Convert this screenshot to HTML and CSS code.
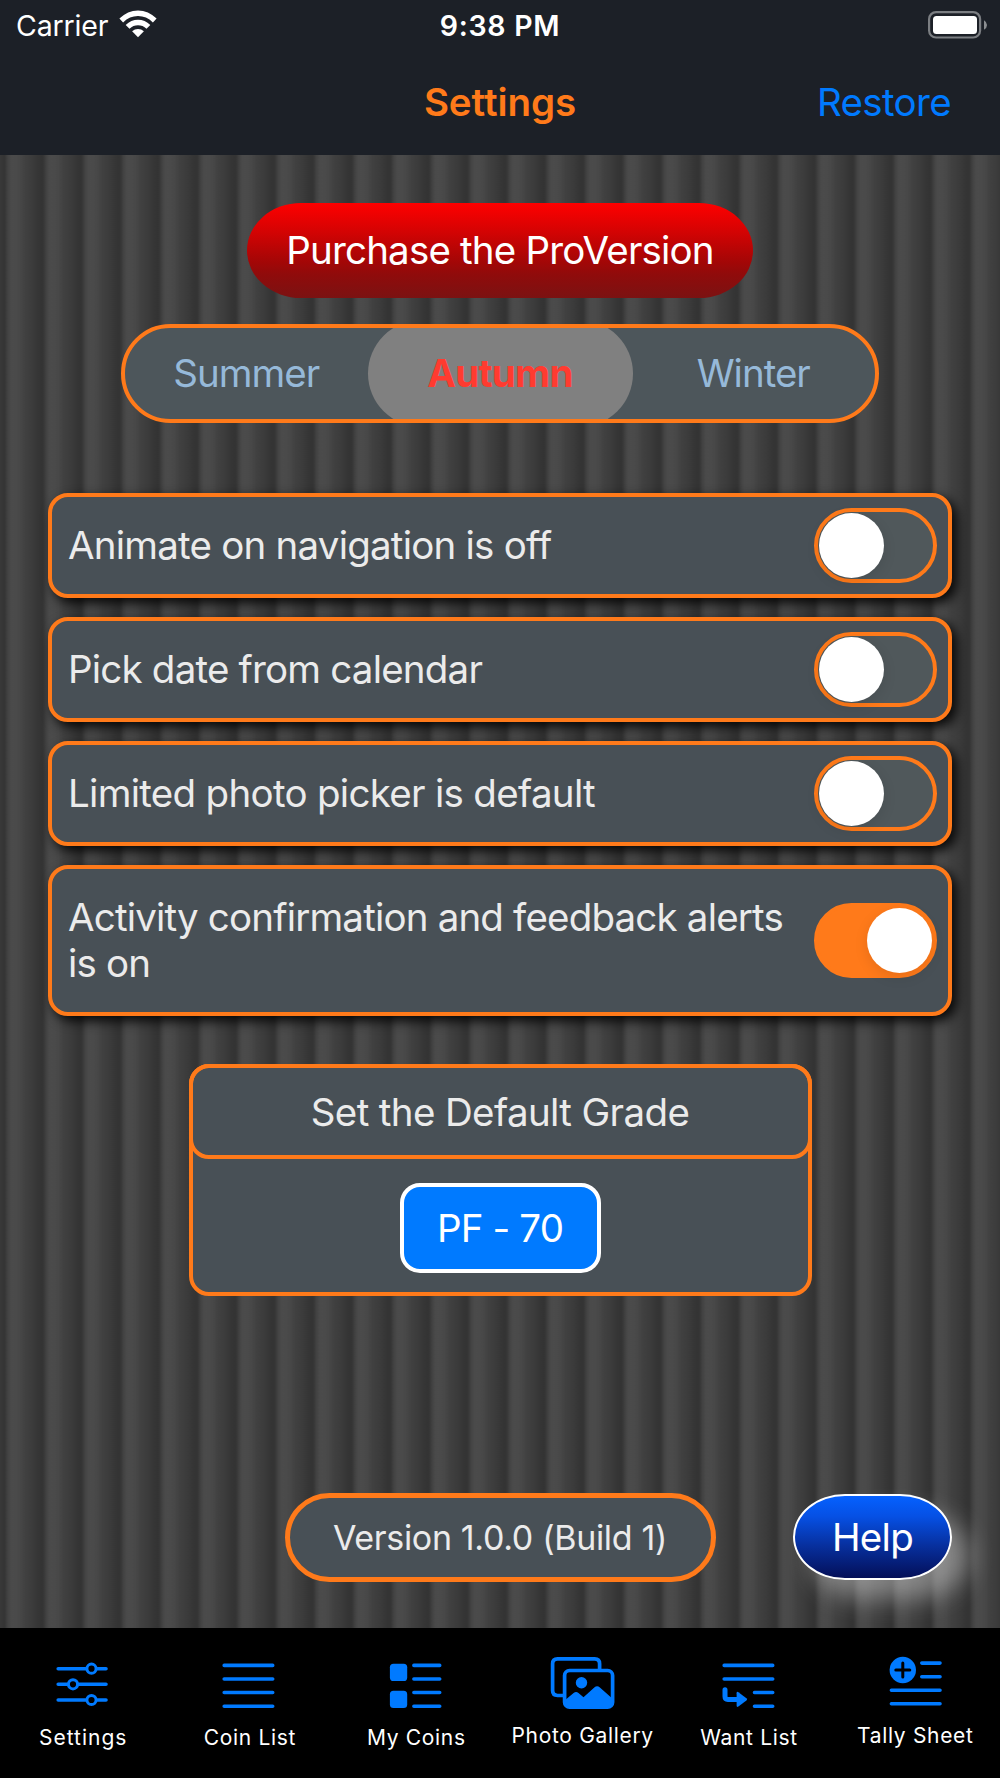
FILE: index.html
```html
<!DOCTYPE html>
<html lang="en">
<head>
<meta charset="utf-8">
<meta name="viewport" content="width=device-width">
<title>Settings</title>
<link rel="stylesheet" href="styles.css">
</head>
<body>
<div class="app">
  <header class="topbar">
    <div class="status">
      <div class="status-left">
        <span class="carrier">Carrier</span>
        <svg class="wifi" width="38" height="28" viewBox="0 0 38 28">
          <path d="M.4 8.6Q8.6.4 19 .4T37.600 8.600L33.900 12.400Q27.400 6 19 6T4.100 12.400Z"/>
          <path d="M6.700 15Q12 9.800 19 9.800T31.300 15L27.500 18.700Q23.800 15.300 19 15.300T10.500 18.700Z"/>
          <path d="M13.100 21.200Q15.700 18.900 19 18.900T24.900 21.200L19 27.200Z"/>
        </svg>
      </div>
      <span class="clock">9:38 PM</span>
      <svg class="battery" width="60" height="28" viewBox="0 0 60 28">
        <rect class="battery-shell" x="1.100" y="1.100" width="51" height="25.400" rx="7"/>
        <rect x="5" y="5" width="44" height="18" rx="3.500" fill="#fff"/>
        <path d="M56 9.200Q59 11 59 14T56 18.800Z" fill="#8b8e91"/>
      </svg>
    </div>
    <nav class="navbar">
      <h1 class="title">Settings</h1>
      <a class="restore">Restore</a>
    </nav>
  </header>

  <main class="content">
    <button class="purchase">Purchase the ProVersion</button>

    <div class="segments">
      <span class="segment segment-summer">Summer</span>
      <span class="segment segment-active">Autumn</span>
      <span class="segment segment-winter">Winter</span>
    </div>

    <section class="options">
      <div class="option">
        <span class="option-text text-animate">Animate on navigation is off</span>
        <span class="toggle"><i class="knob"></i></span>
      </div>
      <div class="option">
        <span class="option-text text-date">Pick date from calendar</span>
        <span class="toggle"><i class="knob"></i></span>
      </div>
      <div class="option">
        <span class="option-text text-photo">Limited photo picker is default</span>
        <span class="toggle"><i class="knob"></i></span>
      </div>
      <div class="option option-tall">
        <span class="option-text">Activity confirmation and feedback alerts<br>is on</span>
        <span class="toggle toggle-on"><i class="knob"></i></span>
      </div>
    </section>

    <section class="grade">
      <h2 class="grade-title">Set the Default Grade</h2>
      <button class="grade-value">PF - 70</button>
    </section>

    <footer class="footer">
      <span class="version">Version 1.0.0 (Build 1)</span>
      <button class="help">Help</button>
    </footer>
  </main>

  <nav class="tabs">
    <a class="tab">
      <svg class="icon" viewBox="0 0 68 60">
        <path d="M9.200 13.700H36.500M48.500 13.700H57M9.200 29.300H18M30 29.300H57M9.200 45H36.500M48.500 45H57"/>
        <circle class="ring" cx="42.500" cy="13.700" r="4.600"/>
        <circle class="ring" cx="24" cy="29.300" r="4.600"/>
        <circle class="ring" cx="42.500" cy="45" r="4.600"/>
      </svg>
      <span class="label label-settings">Settings</span>
    </a>
    <a class="tab">
      <svg class="icon" viewBox="0 0 68 60">
        <path d="M9.200 10.400H57.700M9.200 24H57.700M9.200 37.500H57.700M9.200 51.200H57.700"/>
      </svg>
      <span class="label">Coin List</span>
    </a>
    <a class="tab">
      <svg class="icon" viewBox="0 0 68 60">
        <rect class="solid" x="7.900" y="8.700" width="17.300" height="17.300" rx="3.600"/>
        <rect class="solid" x="7.900" y="35.800" width="17.300" height="17.300" rx="3.600"/>
        <path d="M31.900 10.400H57.700M31.900 24H57.700M31.900 37.500H57.700M31.900 51.200H57.700"/>
      </svg>
      <span class="label">My Coins</span>
    </a>
    <a class="tab tab-raised">
      <svg class="icon" viewBox="0 0 68 60">
        <path class="frame" d="M16 40.500H9.500Q4.600 40.500 4.600 35.600V8.700Q4.600 3.800 9.500 3.800H46.700Q51.600 3.800 51.600 8.700V15"/>
        <rect class="frame" x="16.600" y="15.500" width="48" height="36.700" rx="5"/>
        <circle class="solid" cx="33.500" cy="27.700" r="5.700"/>
        <path class="solid" d="M16.600 45.500L25.600 38Q28.100 36 30.500 38L35.500 42.300L46.300 32.500Q49.100 30.200 51.900 32.500L64.600 43.800V47.500Q64.600 52.200 60 52.200H21.200Q16.600 52.200 16.600 47.500Z"/>
      </svg>
      <span class="label">Photo Gallery</span>
    </a>
    <a class="tab">
      <svg class="icon" viewBox="0 0 68 60">
        <path d="M10.200 10.400H58.700M10.200 24H58.700M40.500 37.500H58.700M40.500 51.200H58.700"/>
        <path class="hook" d="M11 34.800V41.500Q11 44.400 13.900 44.400H24"/>
        <path class="solid" d="M22.600 38.200Q22.600 36 24.400 37.200L32.400 43.200Q33.900 44.400 32.400 45.600L24.400 51.600Q22.600 52.800 22.600 50.600Z"/>
      </svg>
      <span class="label">Want List</span>
    </a>
    <a class="tab tab-raised">
      <svg class="icon" viewBox="0 0 68 60">
        <circle class="solid" cx="21.800" cy="15" r="13.200"/>
        <path class="plus" d="M21.800 8V22M14.800 15H28.800"/>
        <path d="M40.800 8.100H59M40.800 21.700H59M10.400 35.300H59M10.400 48.800H59"/>
      </svg>
      <span class="label">Tally Sheet</span>
    </a>
  </nav>
</div>
</body>
</html>
```
FILE: styles.css
```css
* { box-sizing: border-box; }

body {
  margin: 0;
  background: #000;
  font-family: Inter, "Liberation Sans", sans-serif;
  font-size: 38.5px;
  letter-spacing: -0.82px;
  color: #ebebeb;
}

h1, h2 { margin: 0; font-size: inherit; font-weight: 400; }

button {
  margin: 0;
  padding: 0;
  border: 0;
  font: inherit;
  letter-spacing: inherit;
  color: #fff;
}

.app {
  display: flex;
  flex-direction: column;
  width: 1000px;
  height: 1778px;
  overflow: hidden;
}

/* Status and navigation bars */
.topbar { height: 155px; background: #1c2027; }

.status {
  display: grid;
  grid-template-columns: 1fr auto 1fr;
  align-items: center;
  height: 48px;
  padding: 2px 12px 0 16px;
  color: #fff;
  font-size: 28.5px;
}
.status-left { display: flex; align-items: center; gap: 11px; }
.carrier { letter-spacing: -0.15px; }
.wifi { fill: #fff; margin-top: -3px; }
.clock { margin-left: -4px; font-weight: 600; letter-spacing: 0.7px; }
.battery { justify-self: end; margin-top: -1px; }
.battery-shell { fill: none; stroke: #7b7e82; stroke-width: 2.200; }

.navbar {
  display: grid;
  grid-template-columns: 1fr auto 1fr;
  align-items: center;
  height: 107px;
  padding: 0 49px 0 49px;
}
.title { grid-column: 2; color: #ff7a1a; font-weight: 600; letter-spacing: -0.05px; }
.restore { justify-self: end; color: #007aff; letter-spacing: -0.65px; }

/* Corrugated page background */
.content {
  display: flex;
  flex-direction: column;
  align-items: center;
  height: 1473px;
  padding: 48px 48px 0;
  background: repeating-linear-gradient(90deg,
    #333 0, #363636 1.500px, #434343 4.500px, #4a4a4a 7.500px, #4b4b4b 10px, #484848 16px,
    #404040 22px, #3b3b3b 29px, #353535 35px, #333 38.600px) 3.500px 0;
}

.purchase {
  width: 506px;
  height: 95px;
  padding-bottom: 1px;
  border-radius: 54px / 47.500px;
  background: linear-gradient(#ff0000, #d40303 30%, #a60606 60%, #900b0b 75%, #7b1212);
}

.segments {
  display: grid;
  grid-template-columns: 242.500px 265px 1fr;
  align-items: center;
  width: 758px;
  height: 99px;
  margin-top: 26px;
  border: 4px solid #ff7a1a;
  border-radius: 50px;
  background: #4d565b;
  overflow: hidden;
  color: #96b9d9;
  text-align: center;
}
.segment { line-height: 107px; margin: -8px 0; }
.segment-summer { letter-spacing: -0.95px; }
.segment-winter { padding-right: 1px; letter-spacing: -1px; }
.segment-active {
  border-radius: 54px;
  background: #808080;
  color: #ff3b30;
  font-weight: 700;
  letter-spacing: -0.75px;
}

/* Switch rows */
.options { display: flex; flex-direction: column; gap: 19px; width: 904px; margin-top: 70px; }

.option {
  display: flex;
  align-items: center;
  justify-content: space-between;
  height: 105px;
  padding: 0 11px 0 16px;
  border: 4px solid #ff7a1a;
  border-radius: 20px;
  background: #485056;
  box-shadow: 5px 5px 12px rgba(0, 0, 0, .9);
}
.option-tall { height: 151px; }
.option-text { padding-bottom: 1px; line-height: 46px; white-space: nowrap; }
.text-animate { letter-spacing: -0.78px; }
.text-date { letter-spacing: -0.8px; }
.text-photo { letter-spacing: -0.7px; }

.toggle {
  display: flex;
  align-items: center;
  width: 123px;
  height: 75px;
  border: 4px solid #ff7a1a;
  border-radius: 38px;
  background: #50585b;
  padding: 0 1px;
}
.knob {
  width: 65px;
  height: 65px;
  border-radius: 50%;
  background: #fff;
  box-shadow: 0 4px 14px rgba(0, 0, 0, .1);
}
.toggle-on { justify-content: flex-end; background: #ff7a1a; }

/* Default grade card */
.grade {
  display: flex;
  flex-direction: column;
  align-items: center;
  width: 623px;
  height: 232px;
  margin-top: 48px;
  border: 4px solid #ff7a1a;
  border-radius: 20px;
  background: #485056;
}
.grade-title {
  width: 623px;
  height: 95px;
  margin-top: -4px;
  border: 4px solid #ff7a1a;
  border-radius: 20px;
  line-height: 88px;
  text-align: center;
  letter-spacing: -0.63px;
}
.grade-value {
  width: 201px;
  height: 90px;
  margin-top: 24px;
  border: 4px solid #fff;
  border-radius: 20px;
  background: #007aff;
  letter-spacing: -0.85px;
}

.footer {
  display: grid;
  grid-template-columns: 1fr auto 1fr;
  align-items: start;
  width: 100%;
  margin-top: 197px;
}
.version {
  grid-column: 2;
  width: 431px;
  height: 89px;
  border: 5px solid #ff7a1a;
  border-radius: 45px;
  background: #485056;
  font-size: 34px;
  line-height: 79px;
  text-align: center;
  letter-spacing: -0.33px;
}
.help {
  justify-self: end;
  width: 159px;
  height: 86px;
  margin-top: 1px;
  border: 2.500px solid #fff;
  border-radius: 52px / 43px;
  background: linear-gradient(#0561ff, #0650e4 25%, #07309f 60%, #040f58);
  box-shadow: 18px 19px 25px rgba(255, 255, 255, .37);
  letter-spacing: -0.7px;
}

/* Tab bar */
.tabs {
  position: relative;
  display: grid;
  grid-template-columns: repeat(6, 1fr);
  height: 150px;
  padding: 27px 2px 0 0;
  background: #000;
}
.tab { display: flex; flex-direction: column; align-items: center; }
.icon {
  width: 68px;
  height: 60px;
  fill: none;
  stroke: #007aff;
  stroke-width: 3.600;
  stroke-linecap: round;
}
.icon .solid { fill: #007aff; stroke: none; }
.icon .ring { stroke-width: 3; }
.icon .frame { stroke-width: 3.700; stroke-linecap: butt; }
.icon .hook { stroke-width: 5; stroke-linejoin: round; }
.icon .plus { stroke: #000; stroke-width: 3; }
.label {
  margin: 10px 0 0 1px;
  font-size: 21px;
  line-height: 26px;
  color: #fff;
  letter-spacing: .68px;
}
.label-settings { margin-left: 0; letter-spacing: 1px; }
.tab-raised .label { margin-top: 8px; }
```
